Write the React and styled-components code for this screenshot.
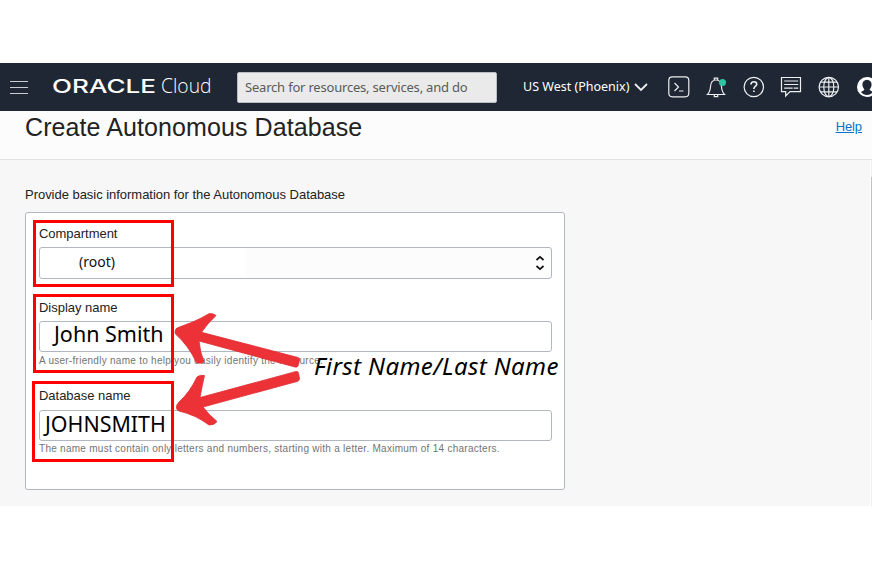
import React from 'react';
import styled, { createGlobalStyle } from 'styled-components';

const GlobalStyle = createGlobalStyle`
  * { box-sizing: border-box; }
  body { margin: 0; background: #fff; overflow: hidden; }
`;

const Page = styled.div`
  position: relative;
  width: 872px;
  height: 568px;
  padding-top: 63px;
  overflow: hidden;
  background: #fff;
  color: #222;
  font-family: "Liberation Sans", Arial, sans-serif;
`;

const Header = styled.header`
  display: flex;
  align-items: center;
  height: 48px;
  padding-left: 10px;
  background: #1e2733;
  color: #fff;
`;

const MenuButton = styled.div`
  display: flex;
  flex: none;
  flex-direction: column;
  gap: 5px;
  width: 18px;
  margin-right: 25px;
`;

const MenuLine = styled.span`
  height: 1px;
  background: #c9ccd0;
`;

const Logo = styled.svg`
  flex: none;
  width: 159px;
  height: 24px;
  margin-right: 25px;
  overflow: visible;
`;

const Search = styled.div`
  display: flex;
  flex: none;
  align-items: center;
  width: 260px;
  height: 31px;
  padding-left: 7px;
  border: 1px solid #b9bec6;
  border-radius: 2px;
  background: #eaeaea;
  color: #5a5a5a;
  font: 13px "Noto Sans", sans-serif;
  letter-spacing: -0.2px;
  white-space: nowrap;
`;

const Region = styled.div`
  display: flex;
  flex: none;
  align-items: center;
  justify-content: space-between;
  width: 125px;
  margin: 0 19px 0 26px;
  font: 12.5px "Noto Sans", sans-serif;
  white-space: nowrap;
`;

const RegionName = styled.span`
  padding-bottom: 1px;
`;

const HeaderIcons = styled.div`
  display: flex;
  flex: none;
  gap: 13.5px;
`;

const Icon = styled.svg`
  display: block;
  flex: none;
  width: ${(p) => p.$w || 24}px;
  height: ${(p) => p.$h || 24}px;
  fill: none;
  stroke: ${(p) => p.$color || '#eceef0'};
  stroke-width: ${(p) => p.$stroke || 1.2};
`;

const TitleBar = styled.div`
  display: flex;
  justify-content: space-between;
  height: 49px;
  padding: 1px 10px 0 25px;
  border-bottom: 1px solid #e2e2e2;
  background: #fcfcfc;
`;

const Title = styled.h1`
  margin: 0;
  font-size: 25px;
  font-weight: 400;
  line-height: 30px;
  letter-spacing: 0.09px;
`;

const HelpLink = styled.a`
  color: #0572ce;
  font-size: 13px;
  line-height: 29px;
  letter-spacing: -0.1px;
  text-decoration: underline;
`;

const Content = styled.main`
  display: flex;
  justify-content: space-between;
  height: 346px;
  background: #f7f7f7;
`;

const Form = styled.section`
  width: 540px;
  margin-left: 25px;
  padding-top: 26px;
`;

const Intro = styled.p`
  margin: 0 0 9px;
  font-size: 13px;
  line-height: 17px;
  letter-spacing: -0.03px;
`;

const Panel = styled.div`
  height: 278px;
  padding: 12px 12px 0 13px;
  border: 1px solid #b2b6c0;
  border-radius: 3px;
  background: #fff;
`;

const Field = styled.div`
  height: ${(p) => p.$height}px;
`;

const Label = styled.div`
  height: ${(p) => p.$height}px;
  font-size: 13px;
  line-height: 17px;
  letter-spacing: -0.03px;
`;

const Input = styled.div`
  display: flex;
  align-items: center;
  justify-content: space-between;
  height: ${(p) => p.$height || 31}px;
  padding: 0 5px 0 ${(p) => p.$indent}px;
  border: 1px solid #b2b6c0;
  border-radius: 3px;
  background: ${(p) => (p.$select ? 'linear-gradient(to right, #fff 206px, #fcfcfc 206px)' : '#fff')};
`;

const RootValue = styled.span`
  color: #111;
  font: 14px/22px "Noto Sans", sans-serif;
  padding-bottom: 3px;
`;

const NameValue = styled.span`
  color: #000;
  font: ${(p) => p.$size}px/24px "Noto Sans", sans-serif;
  padding-bottom: ${(p) => p.$lift}px;
`;

const Hint = styled.div`
  color: #747474;
  font-size: 10px;
  line-height: ${(p) => p.$line}px;
  letter-spacing: 0.27px;
  white-space: nowrap;
`;

const Scrollbar = styled.div`
  width: 2px;
  padding-top: 17px;
  border-left: 1px solid #fff;
  background: #ededed;
`;

const ScrollThumb = styled.div`
  height: 143px;
  background: #c1c1c1;
`;

const Arrows = styled.svg`
  position: absolute;
  inset: 0;
  width: 872px;
  height: 568px;
  fill: #ed3237;
  stroke: #dc2e34;
  stroke-width: 0.8;
  stroke-linejoin: round;
`;

const Highlight = styled.div`
  position: absolute;
  left: ${(p) => p.$x}px;
  top: ${(p) => p.$y}px;
  width: ${(p) => p.$w}px;
  height: ${(p) => p.$h}px;
  border: 3px solid #fe0000;
`;

const Note = styled.div`
  position: absolute;
  left: 314px;
  top: 350px;
  color: #000;
  font: italic 24px/32px "Noto Sans", sans-serif;
  letter-spacing: 0.38px;
  white-space: nowrap;
`;

export default function App() {
  return (
    <>
      <GlobalStyle />
      <Page>
        <Header>
          <MenuButton>
            <MenuLine />
            <MenuLine />
            <MenuLine />
          </MenuButton>
          <Logo viewBox="0 0 159 24" fill="#fff">
            <text x="-1" y="18.4" fontFamily="Inter" fontWeight="500" fontSize="18.5" textLength="104" lengthAdjust="spacingAndGlyphs">ORACLE</text>
            <text x="108" y="18.4" fontFamily="Open Sans" fontWeight="300" fontSize="19.5" textLength="50.5" lengthAdjust="spacingAndGlyphs">Cloud</text>
          </Logo>
          <Search>Search for resources, services, and do</Search>
          <Region>
            <RegionName>US West (Phoenix)</RegionName>
            <Icon $w={14} $h={10} $stroke={1.8} viewBox="0 0 14 10"><path d="M1 2l6 6 6-6" /></Icon>
          </Region>
          <HeaderIcons>
            <Icon viewBox="0 0 24 24">
              <rect x="1.8" y="1.8" width="20" height="20" rx="3.5" />
              <path d="M7.5 8l4 4-4 4M12 16h4.5" />
            </Icon>
            <Icon viewBox="0 0 24 24">
              <path d="M2.500 19.500h17c-2-2-2.700-4-3-8-.3-4.500-2-6.500-5.500-6.500S5.800 7 5.500 11.500c-.3 4-1 6-3 8zM9.300 5V3.200h3.400V5M9.300 19.800v1.900h3.400v-1.900" />
              <circle cx="17.500" cy="7.500" r="3.500" fill="#2fc5a3" stroke="none" />
            </Icon>
            <Icon viewBox="0 0 24 24">
              <circle cx="11.800" cy="12" r="9.700" />
              <path strokeWidth="1.600" d="M9 9.500c0-1.700 1.100-2.700 2.900-2.700 1.700 0 2.800 1 2.800 2.400 0 2-2.800 2.300-2.800 4.300v.6M11.900 15.400v1.700" />
            </Icon>
            <Icon viewBox="0 0 24 24">
              <path d="M1.500 2.500h19v14.200H10L5.700 21v-4.300H1.500zM4.200 6h14M4.200 9.500h14M4.200 13.200h8.500M13.700 13.200h4.500" />
            </Icon>
            <Icon viewBox="0 0 24 24">
              <circle cx="11.800" cy="12" r="9.700" />
              <ellipse cx="11.800" cy="12" rx="5" ry="9.700" />
              <path d="M11.800 2.300v19.400M2.100 12h19.400M3.500 7.200h16.600M3.500 16.800h16.600" />
            </Icon>
            <Icon viewBox="0 0 24 24">
              <circle cx="12" cy="12" r="10" fill="#fff" stroke="none" />
              <path fill="#1e2733" stroke="none" d="M12 4.700c3 0 4.600 2.200 4.600 4.800 0 2.300-1 3.700-2 4.800.3 1.200 1.600 1.900 3.400 2.700-1.500 1.900-3.600 2.900-6 2.900s-4.500-1-6-2.900c1.800-.8 3.100-1.500 3.400-2.700-1-1.100-2-2.500-2-4.800 0-2.600 1.600-4.800 4.600-4.800z" />
            </Icon>
          </HeaderIcons>
        </Header>

        <TitleBar>
          <Title>Create Autonomous Database</Title>
          <HelpLink>Help</HelpLink>
        </TitleBar>

        <Content>
          <Form>
            <Intro>Provide basic information for the Autonomous Database</Intro>
            <Panel>
              <Field $height={74}>
                <Label $height={22}>Compartment</Label>
                <Input $height={32} $indent={39} $select>
                  <RootValue>(root)</RootValue>
                  <Icon $w={12} $h={16} $color="#111" $stroke={1.7} viewBox="0 0 12 16">
                    <path d="M2.500 5L6 1.800 9.500 5M2.500 11L6 14.200 9.500 11" />
                  </Icon>
                </Input>
              </Field>
              <Field $height={88}>
                <Label $height={22}>Display name</Label>
                <Input $indent={14}><NameValue $size={21.5} $lift={5}>John Smith</NameValue></Input>
                <Hint $line={18}>A user-friendly name to help you easily identify the resource.</Hint>
              </Field>
              <Field $height={80}>
                <Label $height={23}>Database name</Label>
                <Input $indent={5}><NameValue $size={21.4} $lift={4}>JOHNSMITH</NameValue></Input>
                <Hint $line={16}>The name must contain only letters and numbers, starting with a letter. Maximum of 14 characters.</Hint>
              </Field>
            </Panel>
          </Form>
          <Scrollbar><ScrollThumb /></Scrollbar>
        </Content>

        <Highlight $x={33} $y={220} $w={141} $h={67} />
        <Highlight $x={33} $y={294} $w={141} $h={79} />
        <Highlight $x={32} $y={381} $w={142} $h={81} />
        <Arrows viewBox="0 0 872 568">
          <path d="M175 332Q175 328 179 327.200L192 322.300Q201 318.500 209 313.700Q213 313 216 315.500Q207 324 201.500 332.300L298 357.500Q300 358 299.500 360L298 366Q297 367.500 295 367L199 341Q200 352 204 362Q200 364 196.500 362.500Q188 345 175.500 334Z" />
          <path d="M176.500 408Q176 405 179 402Q190 392 197 377Q200 374.500 204.500 375.500Q202 386 200 397.500L296 371.500Q298 371 298.500 373L299.500 379Q299 381 297 381.500L203 407Q209 415 217 421.500Q214 425.500 209 425Q196 415 179 411Q176.500 410 176.500 408Z" />
        </Arrows>
        <Note>First Name/Last Name</Note>
      </Page>
    </>
  );
}
